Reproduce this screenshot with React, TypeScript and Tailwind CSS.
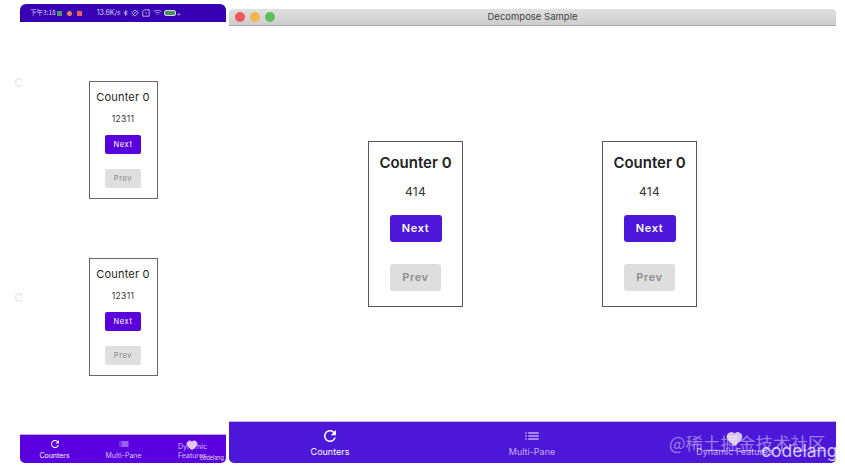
import { Heart } from "lucide-react";

const REFRESH = "M17.65 6.35C16.2 4.9 14.21 4 12 4c-4.42 0-7.99 3.58-7.99 8s3.57 8 7.99 8c3.73 0 6.84-2.55 7.73-6h-2.08c-.82 2.33-3.04 4-5.65 4-3.31 0-6-2.69-6-6s2.69-6 6-6c1.66 0 3.14.69 4.22 1.78L13 11h7V4l-2.35 2.35z";
const LIST = "M3 13h2v-2H3v2zm0 4h2v-2H3v2zm0-8h2V7H3v2zm4 4h14v-2H7v2zm0 4h14v-2H7v2zM7 7v2h14V7H7z";

function NavIcon({ d, className }: { d: string; className: string }) {
    return (
        <svg viewBox="0 0 24 24" fill="currentColor" className={className}>
            <path d={d} />
        </svg>
    );
}

function PhoneCard({ className }: { className: string }) {
    return (
        <div className={`w-[69px] h-[118px] border border-[#666] flex flex-col items-center ${className}`}>
            <div className="mt-[8px] text-[11px] leading-[14px] tracking-[0.2px] text-[#222] font-['Inter',sans-serif]">Counter 0</div>
            <div className="mt-[9px] text-[8.5px] leading-[12px] tracking-[0.3px] text-[#333] font-['Inter',sans-serif]">12311</div>
            <div className="mt-[10px] w-9 h-[19px] rounded-[2px] bg-[#5a00dc] text-white text-[7.5px] font-normal tracking-[0.6px] flex items-center justify-center font-['Inter',sans-serif]">Next</div>
            <div className="mt-[15px] w-9 h-[19px] rounded-[2px] bg-[#dfdfdf] text-[#8a8a8a] text-[7.5px] font-normal tracking-[0.6px] flex items-center justify-center font-['Inter',sans-serif]">Prev</div>
        </div>
    );
}

function WindowCard() {
    return (
        <div className="w-[95px] h-[166px] border border-[#555] flex flex-col items-center">
            <div className="mt-[11px] text-[15px] leading-[20px] font-semibold text-[#222] font-['Inter',sans-serif]">Counter 0</div>
            <div className="mt-[11px] text-[12px] leading-[16px] tracking-[0.3px] text-[#333] font-['Inter',sans-serif]">414</div>
            <div className="mt-[15px] w-[52px] h-[27px] rounded-[3px] bg-[#4d17d9] text-white text-[11px] font-semibold tracking-[0.6px] flex items-center justify-center font-['Inter',sans-serif]">Next</div>
            <div className="mt-[22px] w-[51px] h-[27px] rounded-[3px] bg-[#dedede] text-[#8c8c8c] text-[11px] font-semibold tracking-[0.6px] flex items-center justify-center font-['Inter',sans-serif]">Prev</div>
        </div>
    );
}

function StatusBar() {
    return (
        <div className="h-[18px] bg-[#3700b3] rounded-t-[6px] flex items-center pl-[10px] text-[6.5px] text-[#d9d0f5] font-['Inter',sans-serif]">
            <span className="font-['Noto_Sans_CJK_SC',sans-serif]">下午3:18</span>
            <span className="ml-[1px] w-[5px] h-[5px] bg-[#4f9a6a]" />
            <span className="ml-[5px] w-[5px] h-[5px] rounded-full bg-[#e8805a]" />
            <span className="ml-[5px] w-[5px] h-[5px] bg-[#e8605a]" />
            <span className="ml-[15px] text-[7px]">13.6K/s</span>
            <svg viewBox="0 0 8 10" className="ml-[2px] w-[5px] h-[8px]" fill="none" stroke="#d9d0f5" strokeWidth="1">
                <path d="M1 3l6 4-3 2V1l3 2-6 4" />
            </svg>
            <svg viewBox="0 0 10 10" className="ml-[3px] w-[8px] h-[8px]" fill="none" stroke="#d9d0f5" strokeWidth="1">
                <path d="M5 1l4 4-4 4-4-4zM2 8l6-6" />
            </svg>
            <svg viewBox="0 0 10 10" className="ml-[3px] w-[8px] h-[8px]" fill="none" stroke="#d9d0f5" strokeWidth="1">
                <path d="M3 1h6v8H1V3zM4 4l2 2" />
            </svg>
            <svg viewBox="0 0 12 10" className="ml-[3px] w-[9px] h-[8px]" fill="none" stroke="#d9d0f5" strokeWidth="1">
                <path d="M1 3c3-2 7-2 10 0M3 5c2-1 4-1 6 0M5 7c1-.5 1-.5 2 0" />
            </svg>
            <span className="ml-[2px] w-[12px] h-[6px] rounded-[2px] border border-[#d9d0f5] bg-[#4f8f5a]" />
            <span className="ml-[1px] text-[6px]">+</span>
        </div>
    );
}

export default function App() {
    return (
        <div className="relative w-[845px] h-[470px] bg-white overflow-hidden flex pl-5">
            {/* phone */}
            <div className="w-[206px] h-[459px] mt-1 flex flex-col">
                <StatusBar />
                <div className="flex-1 flex flex-col items-center">
                    <PhoneCard className="mt-[59px]" />
                    <PhoneCard className="mt-[59px]" />
                </div>
                <div className="relative h-[29px] bg-[#5a00e0] border-t border-[#c9a6f5] rounded-b-[5px] flex text-[7px] text-[#d5c0f8] font-['Inter',sans-serif]">
                    <div className="w-[69px] flex flex-col items-center text-white">
                        <NavIcon d={REFRESH} className="w-[12px] h-[12px] mt-[3px]" />
                        <span className="mt-[1px] leading-[9px]">Counters</span>
                    </div>
                    <div className="w-[69px] flex flex-col items-center">
                        <NavIcon d={LIST} className="w-[12px] h-[12px] mt-[3px]" />
                        <span className="mt-[1px] leading-[9px]">Multi-Pane</span>
                    </div>
                    <div className="w-[68px] pl-[20px] pt-[7px] leading-[9px]">
                        <div>Dynamic</div>
                        <div>Features</div>
                    </div>
                    <Heart className="absolute left-[166px] top-[4px] w-[12px] h-[12px] fill-[#e6c8f5] text-[#e6c8f5]" />
                    <span className="absolute right-[2px] bottom-[1px] text-[5.5px] leading-[8px] text-[#ddd]">codelang</span>
                </div>
            </div>

            {/* desktop window */}
            <div className="w-[607px] h-[454px] mt-[9px] ml-[3px] flex flex-col">
                <div className="relative h-[17px] rounded-t-[4px] bg-gradient-to-b from-[#e0e0e0] to-[#cdcdcd] border-b border-[#aaa] flex items-center justify-center">
                    <div className="absolute left-[6px] top-[3px] flex gap-[5px]">
                        <span className="w-[10px] h-[10px] rounded-full bg-[#f0585a]" />
                        <span className="w-[10px] h-[10px] rounded-full bg-[#f5b650]" />
                        <span className="w-[10px] h-[10px] rounded-full bg-[#5cc05a]" />
                    </div>
                    <span className="text-[9.5px] text-[#444] font-['Inter',sans-serif]">Decompose Sample</span>
                </div>
                <div className="flex-1 flex items-center justify-center gap-[139px]">
                    <WindowCard />
                    <WindowCard />
                </div>
                <div className="relative h-[42px] bg-[#4d17d9] border-t border-[#c9b6f0] rounded-b-[5px] flex text-[9px] text-[#c5aef5] font-['Inter',sans-serif]">
                    <div className="w-[202px] flex flex-col items-center text-white">
                        <NavIcon d={REFRESH} className="w-[18px] h-[18px] mt-[5px]" />
                        <span className="mt-[1px] leading-[12px]">Counters</span>
                    </div>
                    <div className="w-[202px] flex flex-col items-center">
                        <NavIcon d={LIST} className="w-[18px] h-[18px] mt-[5px]" />
                        <span className="mt-[1px] leading-[12px]">Multi-Pane</span>
                    </div>
                    <div className="w-[203px] flex flex-col items-center">
                        <div className="h-[18px] mt-[5px]" />
                        <span className="mt-[1px] leading-[12px]">Dynamic Features</span>
                    </div>
                </div>
            </div>

            {/* watermark */}
            <Heart className="absolute left-[726px] top-[430px] w-[17px] h-[17px] fill-[#d9c8f5] text-[#d9c8f5]" />
            <span className="absolute left-[669px] top-[431px] text-[17.5px] leading-[24px] text-white/45 font-['Noto_Sans_CJK_SC',sans-serif]">@稀土掘金技术社区</span>
            <span className="absolute left-[761px] top-[439px] text-[17.5px] leading-[24px] text-white/75 font-['Inter',sans-serif]">codelang</span>

            {/* ghost swipe marks on the phone's left edge */}
            <span className="absolute left-[14px] top-[76px] text-[12px] leading-[14px] font-bold text-[#ececec] font-['Inter',sans-serif]">C</span>
            <span className="absolute left-[14px] top-[291px] text-[12px] leading-[14px] font-bold text-[#ececec] font-['Inter',sans-serif]">C</span>
        </div>
    );
}
